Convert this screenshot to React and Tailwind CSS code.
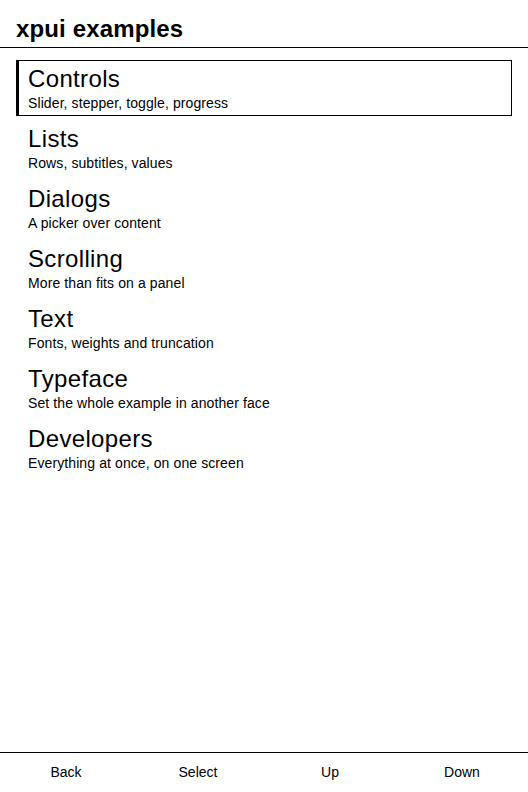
import React, { useState } from "react";

const examples = [
  { title: "Controls", subtitle: "Slider, stepper, toggle, progress" },
  { title: "Lists", subtitle: "Rows, subtitles, values" },
  { title: "Dialogs", subtitle: "A picker over content" },
  { title: "Scrolling", subtitle: "More than fits on a panel" },
  { title: "Text", subtitle: "Fonts, weights and truncation" },
  { title: "Typeface", subtitle: "Set the whole example in another face" },
  { title: "Developers", subtitle: "Everything at once, on one screen" },
];

const buttons = ["Back", "Select", "Up", "Down"];

const App = () => {
  const [selected, setSelected] = useState(0);

  return (
    <div className="h-screen flex flex-col bg-white text-black font-['Liberation_Sans',Arial,sans-serif]">
      <div className="h-12 shrink-0 border-b border-black px-4 pt-[13px]">
        <h1 className="text-2xl leading-8 font-bold tracking-[0.15px]">xpui examples</h1>
      </div>
      <div className="flex-1 flex flex-col gap-1 px-4 pt-3">
        {examples.map((item, i) => (
          <div
            key={item.title}
            onClick={() => setSelected(i)}
            className={`h-14 box-border border border-l-[3px] pl-[9px] pt-1 ${
              i === selected ? "border-black" : "border-transparent"
            }`}
          >
            <div className="text-2xl leading-7 tracking-[0.35px]">{item.title}</div>
            <div className="text-sm leading-5 tracking-[0.1px]">{item.subtitle}</div>
          </div>
        ))}
      </div>
      <div className="h-10 shrink-0 border-t border-black grid grid-cols-4 items-center pb-[2px]">
        {buttons.map((label) => (
          <div key={label} className="text-sm leading-5 text-center">
            {label}
          </div>
        ))}
      </div>
    </div>
  );
};

export default App;
